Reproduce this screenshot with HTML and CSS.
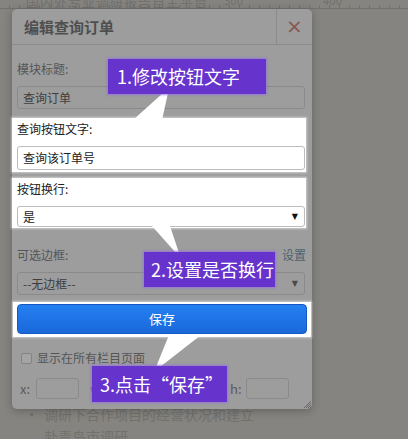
FILE: index.html
```html
<!DOCTYPE html>
<html lang="zh-CN">
<head>
    <meta charset="UTF-8">
    <meta name="viewport" content="width=device-width, initial-scale=1.0">
    <title>编辑查询订单</title>
    <link rel="stylesheet" href="styles.css">
</head>
<body>
    <div class="page">
        <!-- page behind the dialog, dimmed -->
        <div class="ruler">
            <span class="ruler-text">国内外专业调研报告自主平台</span>
            <span class="ruler-num n300">300</span>
            <span class="ruler-num n400">400</span>
        </div>
        <ul class="bg-list">
            <li>调研下合作项目的经营状况和建立</li>
            <li class="plain">赴青岛市调研</li>
        </ul>

        <div class="modal">
            <div class="modal-header">
                <div class="modal-title">编辑查询订单</div>
                <div class="modal-close">×</div>
            </div>
            <div class="modal-body">
                <div class="label first">模块标题:</div>
                <div class="field dim">查询订单</div>

                <div class="spot">
                    <div class="label">查询按钮文字:</div>
                    <div class="field">查询该订单号</div>
                </div>

                <div class="spot spot-2">
                    <div class="label">按钮换行:</div>
                    <div class="field select">是<span class="arrow">▼</span></div>
                </div>

                <div class="label label-row">
                    <span>可选边框:</span>
                    <span class="link">设置</span>
                </div>
                <div class="field dim select select-2">--无边框--<span class="arrow">▼</span></div>

                <div class="spot spot-btn">
                    <button class="save-btn">保存</button>
                </div>

                <div class="check-row">
                    <span class="checkbox"></span>
                    <span>显示在所有栏目页面</span>
                </div>

                <div class="pos-row">
                    <div class="pos"><span>x:</span><span class="pos-input"></span></div>
                    <div class="pos"><span>w:</span><span class="pos-input"></span></div>
                    <div class="pos"><span>y:</span><span class="pos-input"></span></div>
                    <div class="pos"><span>h:</span><span class="pos-input"></span></div>
                </div>
            </div>
            <svg class="grip" width="8" height="8" viewBox="0 0 8 8">
                <path d="M8 1L1 8M8 3L3 8M8 5L5 8M8 7L7 8" stroke="#6a6a6a" stroke-width="1"/>
            </svg>
        </div>

        <!-- callout pointers -->
        <svg class="pointers" width="408" height="439" viewBox="0 0 408 439">
            <polygon points="163,93 168,93 162,120 133,120" fill="#fff"/>
            <polygon points="152,226 170,226 179,253 176,253" fill="#fff"/>
            <polygon points="169,335 201,335 160,367 156,367" fill="#fff"/>
        </svg>

        <div class="tip tip-1">1.修改按钮文字</div>
        <div class="tip tip-2">2.设置是否换行</div>
        <div class="tip tip-3">3.点击“保存”</div>
    </div>
</body>
</html>
```

FILE: styles.css
```css
body {
    margin: 0;
    padding: 0;
    background-color: #858480;
    font-family: "Noto Sans CJK SC", "Liberation Sans", sans-serif;
    overflow: hidden;
}
.page {
    position: relative;
    width: 408px;
    height: 439px;
    overflow: hidden;
}

/* dimmed page behind */
.ruler {
    position: relative;
    height: 8px;
    border-bottom: 1px solid #72716e;
    background-image: repeating-linear-gradient(90deg, transparent 0, transparent 9px, #72716e 9px, #72716e 10px);
    background-size: 100% 3px;
    background-repeat: no-repeat;
    background-position: 0 5px;
    overflow: hidden;
}
.ruler-text {
    position: absolute;
    left: 26px;
    top: -8px;
    font-size: 13px;
    color: #72716e;
    letter-spacing: 1px;
}
.ruler-num {
    position: absolute;
    top: -4px;
    font-size: 10px;
    font-family: "DejaVu Sans", sans-serif;
    color: #72716e;
}
.n300 {
    left: 224px;
}
.n400 {
    left: 323px;
}
.bg-list {
    margin: 0;
    padding: 394px 0 0 44px;
    list-style: none;
    font-size: 14px;
    line-height: 22px;
    color: #72716e;
}
.bg-list li {
    position: relative;
}
.bg-list li::before {
    content: "";
    position: absolute;
    left: -14px;
    top: 10px;
    width: 3px;
    height: 3px;
    background: #72716e;
}
.bg-list li.plain::before {
    display: none;
}

/* dialog */
.modal {
    position: absolute;
    left: 12px;
    top: 9px;
    width: 300px;
    height: 400px;
    background-color: #9d9d9d;
    border-radius: 5px;
    box-shadow: 0 2px 8px rgba(0, 0, 0, 0.25);
}
.modal-header {
    display: flex;
    height: 35px;
    border-bottom: 1px solid #8b8b8b;
}
.modal-title {
    flex: 1;
    padding-left: 12px;
    line-height: 36px;
    font-size: 15px;
    font-weight: bold;
    color: #4f4f4f;
}
.modal-close {
    width: 35px;
    border-left: 1px solid #8b8b8b;
    text-align: center;
    line-height: 34px;
    font-size: 20px;
    color: #8a5550;
    font-family: "DejaVu Sans", sans-serif;
}
.modal-body {
    padding: 0 7px 0 5px;
}
.label {
    font-size: 12px;
    line-height: 18px;
    color: #555;
}
.label.first {
    margin-top: 15px;
}
.field {
    box-sizing: border-box;
    height: 24px;
    margin-top: 8px;
    padding-left: 5px;
    border: 1px solid #bcbcbc;
    border-radius: 3px;
    background-color: #fff;
    font-size: 12px;
    line-height: 22px;
    color: #222;
}
.field.dim {
    height: 23px;
    line-height: 21px;
    border-color: #8a8a8a;
    background-color: #9d9d9d;
    color: #3d3d3d;
}
.select {
    display: flex;
    justify-content: space-between;
    height: 21px;
    line-height: 19px;
    padding-right: 6px;
}
.select-2 {
    height: 22px;
    line-height: 20px;
}
.arrow {
    font-size: 8px;
    font-family: "DejaVu Sans", sans-serif;
    color: #111;
}
.field.dim .arrow {
    color: #4a4a4a;
}

/* highlighted areas */
.spot {
    margin: 9px -1px 0 -5px;
    padding: 2px 1px 2px 5px;
    background-color: #fff;
    box-shadow: 0 0 2px 1px rgba(255, 255, 255, 0.5);
}
.spot .label {
    color: #222;
}
.spot-2 {
    margin-top: 6px;
    padding-bottom: 1px;
}
.label-row {
    display: flex;
    justify-content: space-between;
    margin-top: 18px;
}
.link {
    color: #4d6270;
    margin-right: -1px;
}
.spot-btn {
    margin: 7px -6px 0 -4px;
    padding: 2px 4px 3px 4px;
}
.save-btn {
    display: block;
    width: 100%;
    height: 30px;
    padding: 0 0 2px;
    border: 1px solid #1558c2;
    border-radius: 4px;
    background: linear-gradient(#2580f2, #1a68da);
    color: #fff;
    font-family: "Noto Sans CJK SC", sans-serif;
    font-size: 13px;
    cursor: pointer;
}
.check-row {
    display: flex;
    align-items: center;
    gap: 5px;
    margin-top: 12px;
    padding-left: 4px;
    font-size: 12px;
    line-height: 18px;
    color: #555;
}
.checkbox {
    box-sizing: border-box;
    width: 11px;
    height: 11px;
    border: 1px solid #848484;
    border-radius: 2px;
    background-color: #a4a4a4;
}
.pos-row {
    display: flex;
    gap: 11px;
    margin-top: 11px;
    padding-left: 3px;
}
.pos {
    display: flex;
    align-items: center;
    font-size: 13px;
    color: #5a5a5a;
}
.pos span:first-child {
    width: 16px;
}
.pos-input {
    box-sizing: border-box;
    width: 43px;
    height: 21px;
    border: 1px solid #8a8a8a;
    border-radius: 3px;
}
.grip {
    position: absolute;
    right: 1px;
    bottom: 1px;
}

/* callouts */
.pointers {
    position: absolute;
    left: 0;
    top: 0;
    pointer-events: none;
}
.tip {
    position: absolute;
    box-sizing: border-box;
    height: 35px;
    padding-left: 9px;
    background-color: #6633cc;
    box-shadow: 0 0 2px 1px rgba(150, 110, 230, 0.8);
    color: #fff;
    font-size: 18px;
    line-height: 35px;
    white-space: nowrap;
}
.tip-1 {
    left: 108px;
    top: 59px;
    width: 158px;
}
.tip-2 {
    left: 144px;
    top: 252px;
    width: 131px;
    padding-left: 7px;
}
.tip-3 {
    left: 92px;
    top: 366px;
    width: 135px;
    height: 36px;
    line-height: 36px;
    padding-left: 8px;
}
```
